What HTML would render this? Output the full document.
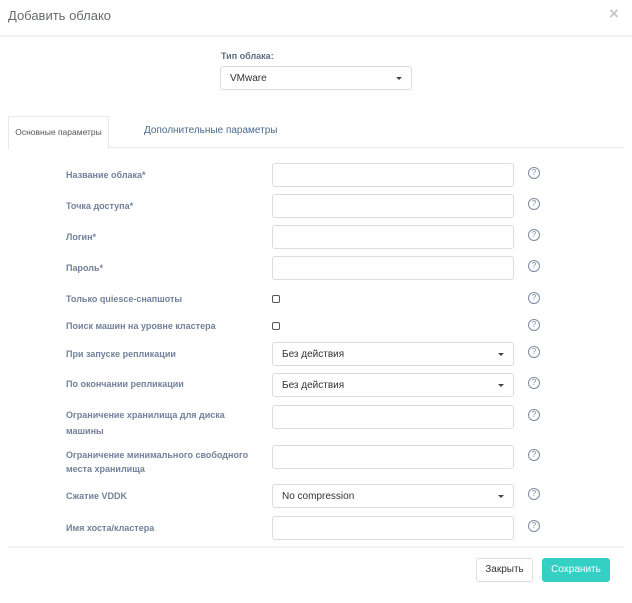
<!DOCTYPE html>
<html><head><meta charset="utf-8"><style>
*{box-sizing:border-box;margin:0;padding:0}
body{width:632px;height:603px;background:#fff;font-family:"Liberation Sans",Arial,sans-serif;position:relative;overflow:hidden;color:#333}
.a{position:absolute;white-space:nowrap}
.lbl{position:absolute;left:66px;font-size:9px;font-weight:bold;color:#72819a;line-height:14px;width:200px}
.inp{position:absolute;left:272px;width:242px;height:24px;border:1px solid #dcdcdc;border-radius:3px;background:#fff;font-size:10px;color:#333;padding-left:9px;padding-top:1px;line-height:22px}
.caret{position:absolute;right:9px;top:10px;width:0;height:0;border-left:3px solid transparent;border-right:3px solid transparent;border-top:3px solid #444}
.help{position:absolute;left:528px;width:12px;height:12px;border:1px solid #7d8aa0;border-radius:50%;font-size:8px;color:#7d8aa0;text-align:center;line-height:10px}
.cb{position:absolute;left:272px;width:8px;height:8px;border:1.2px solid #555;border-radius:2px}
</style></head><body>
<div class="a" style="left:8px;top:8px;font-size:13px;color:#676a6c">Добавить облако</div>
<div class="a" style="left:609px;top:4px;font-size:17px;font-weight:bold;color:#c8c8c8">×</div>
<div class="a" style="left:0;top:35px;width:632px;height:2px;background:#f3f3f4"></div>

<div class="a" style="left:221px;top:51px;font-size:9px;font-weight:bold;color:#5d6e84">Тип облака:</div>
<div class="inp" style="left:220px;top:66px;width:192px;height:24px">VMware<span class="caret"></span></div>

<div class="a" style="left:8px;top:116px;width:101px;height:33px;border:1px solid #e7eaec;border-bottom:none;background:#fff;z-index:2;font-size:8.5px;color:#555;text-align:center;line-height:31px">Основные параметры</div>
<div class="a" style="left:144px;top:125px;font-size:10px;color:#4b6a8a">Дополнительные параметры</div>
<div class="a" style="left:8px;top:147px;width:616px;height:1px;background:#e7eaec"></div>

<div class="lbl" style="top:168px">Название облака*</div>
<div class="inp" style="top:163px"></div><div class="help" style="top:167px">?</div>
<div class="lbl" style="top:199px">Точка доступа*</div>
<div class="inp" style="top:194px"></div><div class="help" style="top:198px">?</div>
<div class="lbl" style="top:230px">Логин*</div>
<div class="inp" style="top:225px"></div><div class="help" style="top:229px">?</div>
<div class="lbl" style="top:261px">Пароль*</div>
<div class="inp" style="top:256px"></div><div class="help" style="top:260px">?</div>

<div class="lbl" style="top:292px">Только quiesce-снапшоты</div>
<div class="cb" style="top:295px"></div><div class="help" style="top:292px">?</div>
<div class="lbl" style="top:319px">Поиск машин на уровне кластера</div>
<div class="cb" style="top:322px"></div><div class="help" style="top:319px">?</div>

<div class="lbl" style="top:347px">При запуске репликации</div>
<div class="inp" style="top:342px">Без действия<span class="caret"></span></div><div class="help" style="top:346px">?</div>
<div class="lbl" style="top:377px">По окончании репликации</div>
<div class="inp" style="top:373px">Без действия<span class="caret"></span></div><div class="help" style="top:377px">?</div>

<div class="lbl" style="top:407px;line-height:16px">Ограничение хранилища для диска<br>машины</div>
<div class="inp" style="top:405px"></div><div class="help" style="top:409px">?</div>
<div class="lbl" style="top:448px;line-height:14px">Ограничение минимального свободного<br>места хранилища</div>
<div class="inp" style="top:445px"></div><div class="help" style="top:449px">?</div>

<div class="lbl" style="top:489px">Сжатие VDDK</div>
<div class="inp" style="top:484px">No compression<span class="caret"></span></div><div class="help" style="top:488px">?</div>
<div class="lbl" style="top:521px">Имя хоста/кластера</div>
<div class="inp" style="top:516px"></div><div class="help" style="top:520px">?</div>

<div class="a" style="left:8px;top:546px;width:616px;height:2px;background:#f3f3f4"></div>
<div class="a" style="left:476px;top:558px;width:57px;height:24px;border:1px solid #dedede;border-radius:3px;font-size:10px;color:#333;text-align:center;line-height:22px">Закрыть</div>
<div class="a" style="left:542px;top:558px;width:68px;height:24px;background:#35d0c4;border-radius:3px;font-size:10px;color:#fff;text-align:center;line-height:24px">Сохранить</div>
</body></html>
